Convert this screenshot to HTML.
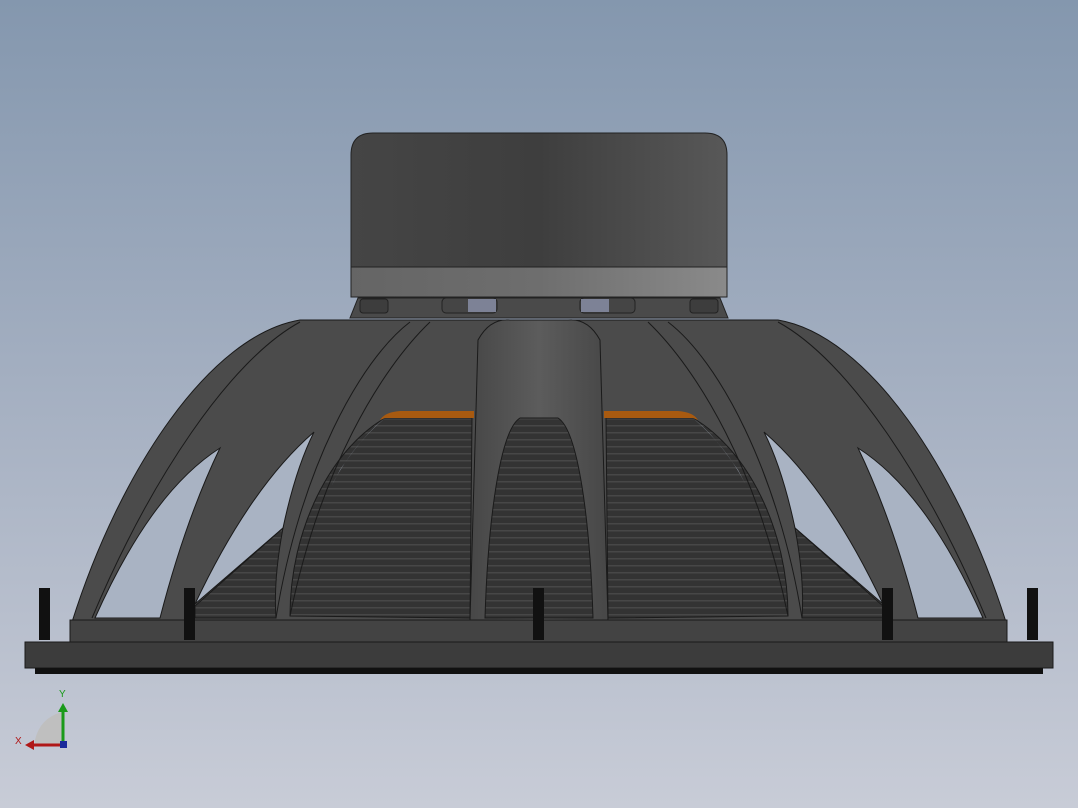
<!DOCTYPE html>
<html><head><style>
html,body{margin:0;padding:0;width:1078px;height:808px;overflow:hidden;background:linear-gradient(#8497ae,#a9b3c4 55%,#c8ccd7);}
svg{position:absolute;left:0;top:0}
</style></head><body>
<svg width="1078" height="808" viewBox="0 0 1078 808" xmlns="http://www.w3.org/2000/svg">
<defs>
<linearGradient id="mag" x1="0" x2="1"><stop offset="0" stop-color="#454545"/><stop offset=".5" stop-color="#3e3e3e"/><stop offset="1" stop-color="#585858"/></linearGradient>
<linearGradient id="band" x1="0" x2="1"><stop offset="0" stop-color="#656565"/><stop offset=".5" stop-color="#6e6e6e"/><stop offset="1" stop-color="#8a8a8a"/></linearGradient>
<pattern id="str" width="8" height="7" patternUnits="userSpaceOnUse"><rect width="8" height="7" fill="#333"/><rect y="5" width="8" height="1.5" fill="#474747"/></pattern>
<linearGradient id="rib" x1="0" x2="1"><stop offset="0" stop-color="#474747"/><stop offset=".5" stop-color="#5c5c5c"/><stop offset="1" stop-color="#474747"/></linearGradient>
<g id="half" stroke="#1a1a1a" stroke-width="1">
 <path d="M290,616 C290,530 330,450 385,418 L472,418 L470,618 Z" fill="url(#str)"/>
 <path d="M380,420 Q385,412 400,411 L474,411 L474,418 L385,418 Z" fill="#a85a10" stroke="none"/>
 <path d="M385,418 C360,440 345,460 332,485 L340,470 C355,448 368,432 385,418 Z" fill="#a9b3c3" stroke="none"/>
 <path d="M95,618 C130,540 170,480 220,448 C195,500 175,560 160,618 Z" fill="#a9b3c3"/>
 <path d="M195,604 C230,530 270,470 314,432 C300,460 290,495 283,528 Z" fill="#a9b3c3"/>
 <path d="M195,606 L283,528 C277,560 274,590 276,618 L195,618 Z" fill="url(#str)"/>
 <path d="M300,322 C230,360 150,480 92,618" fill="none"/>
 <path d="M410,322 C360,360 300,470 276,618" fill="none"/>
 <path d="M430,322 C380,370 320,470 290,616" fill="none"/>
</g>
</defs>
<path d="M373,133 L705,133 Q727,133 727,155 L727,267 L351,267 L351,155 Q351,133 373,133 Z" fill="url(#mag)" stroke="#222"/>
<rect x="351" y="267" width="376" height="30" fill="url(#band)" stroke="#222"/>
<path d="M358,298 L720,298 L728,318 L350,318 Z" fill="#4a4a4a" stroke="#222"/>
<rect x="442" y="298" width="55" height="15" rx="4" fill="#454545" stroke="#222"/>
<rect x="468" y="299" width="28" height="13" fill="#7d8296"/>
<rect x="580" y="298" width="55" height="15" rx="4" fill="#454545" stroke="#222"/>
<rect x="581" y="299" width="28" height="13" fill="#7d8296"/>
<rect x="360" y="299" width="28" height="14" rx="3" fill="#3d3d3d" stroke="#222"/>
<rect x="690" y="299" width="28" height="14" rx="3" fill="#3d3d3d" stroke="#222"/>
<path d="M72,622 C120,470 210,335 300,320 L778,320 C868,335 958,470 1006,622 Z" fill="#4b4b4b" stroke="#1a1a1a"/>
<use href="#half"/>
<use href="#half" transform="translate(1078,0) scale(-1,1)"/>
<path d="M470,620 L478,340 Q490,318 510,320 L568,320 Q588,318 600,340 L608,620 Z" fill="url(#rib)" stroke="#1a1a1a"/>
<path d="M485,618 C488,520 500,430 520,418 L558,418 C578,430 590,520 593,618 Z" fill="url(#str)" stroke="#1a1a1a"/>
<rect x="70" y="620" width="937" height="22" fill="#434343" stroke="#1a1a1a"/>
<rect x="25" y="642" width="1028" height="26" fill="#3c3c3c" stroke="#1a1a1a"/>
<rect x="35" y="668" width="1008" height="6" fill="#111"/>
<g fill="#111">
<rect x="39" y="588" width="11" height="52"/><rect x="184" y="588" width="11" height="52"/>
<rect x="533" y="588" width="11" height="52"/><rect x="882" y="588" width="11" height="52"/>
<rect x="1027" y="588" width="11" height="52"/>
</g>
<path d="M35,740 Q40,718 62,712 L62,745 L35,745 Z" fill="#bfbfbf"/>
<line x1="63" y1="745" x2="63" y2="710" stroke="#1a9a1a" stroke-width="3"/>
<path d="M58,712 L63,703 L68,712 Z" fill="#1a9a1a"/>
<line x1="63" y1="745" x2="33" y2="745" stroke="#b01818" stroke-width="3"/>
<path d="M34,740 L25,745 L34,750 Z" fill="#b01818"/>
<rect x="60" y="741" width="7" height="7" fill="#1a2a9a"/>
<text x="59" y="697" font-family="Liberation Sans, sans-serif" font-size="10" fill="#1a9a1a">Y</text>
<text x="15" y="744" font-family="Liberation Sans, sans-serif" font-size="10" fill="#b01818">X</text>
</svg>
</body></html>
